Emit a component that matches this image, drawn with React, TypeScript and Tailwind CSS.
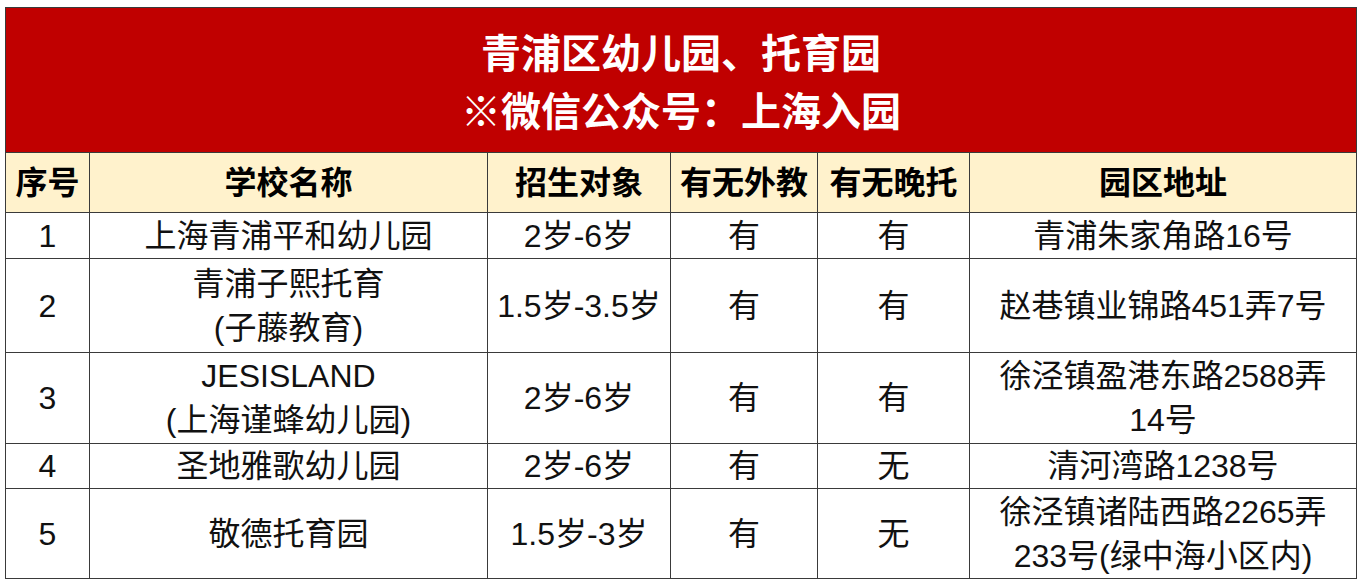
import React from "react";

const rows: { no: string; name: React.ReactNode; age: string; foreign: string; late: string; addr: React.ReactNode; h: string }[] = [
  { no: "1", name: "上海青浦平和幼儿园", age: "2岁-6岁", foreign: "有", late: "有", addr: "青浦朱家角路16号", h: "h-[46px]" },
  { no: "2", name: (<>青浦子熙托育<br />(子藤教育)</>), age: "1.5岁-3.5岁", foreign: "有", late: "有", addr: "赵巷镇业锦路451弄7号", h: "h-[94px]" },
  { no: "3", name: (<>JESISLAND<br />(上海谨蜂幼儿园)</>), age: "2岁-6岁", foreign: "有", late: "有", addr: (<>徐泾镇盈港东路2588弄<br />14号</>), h: "h-[91px]" },
  { no: "4", name: "圣地雅歌幼儿园", age: "2岁-6岁", foreign: "有", late: "无", addr: "清河湾路1238号", h: "h-[45px]" },
  { no: "5", name: "敬德托育园", age: "1.5岁-3岁", foreign: "有", late: "无", addr: (<>徐泾镇诸陆西路2265弄<br />233号(绿中海小区内)</>), h: "h-[90px]" },
];

const font = { fontFamily: '"Liberation Sans", "Noto Sans CJK SC", sans-serif' };

export default function App() {
  const td = "border border-[#3a3a3a] text-center align-middle p-0 leading-[44px]";
  const th = "border border-[#3a3a3a] text-center align-middle p-0 font-bold bg-[#fff2cc] text-black leading-[40px]";
  return (
    <div className="bg-white w-[1363px] h-[586px] pt-[7px] pl-[5px] overflow-hidden" style={font}>
      <table className="table-fixed border-collapse w-[1351px] text-[32px] text-[#111]">
        <colgroup>
          <col className="w-[84px]" />
          <col className="w-[398px]" />
          <col className="w-[183px]" />
          <col className="w-[147px]" />
          <col className="w-[152px]" />
          <col className="w-[387px]" />
        </colgroup>
        <tbody>
          <tr className="h-[145px]">
            <td colSpan={6} className="border border-[#3a3a3a] bg-[#c00000] text-white font-bold text-[40px] leading-[58px] text-center align-middle p-0 pt-[5px]">
              青浦区幼儿园、托育园
              <br />
              ※微信公众号：上海入园
            </td>
          </tr>
          <tr className="h-[60px]">
            <td className={th}>序号</td>
            <td className={th}>学校名称</td>
            <td className={th}>招生对象</td>
            <td className={th}>有无外教</td>
            <td className={th}>有无晚托</td>
            <td className={th}>园区地址</td>
          </tr>
          {rows.map((r) => (
            <tr key={r.no} className={r.h}>
              <td className={td}>{r.no}</td>
              <td className={td}>{r.name}</td>
              <td className={td}>{r.age}</td>
              <td className={td}>{r.foreign}</td>
              <td className={td}>{r.late}</td>
              <td className={td}>{r.addr}</td>
            </tr>
          ))}
        </tbody>
      </table>
    </div>
  );
}
